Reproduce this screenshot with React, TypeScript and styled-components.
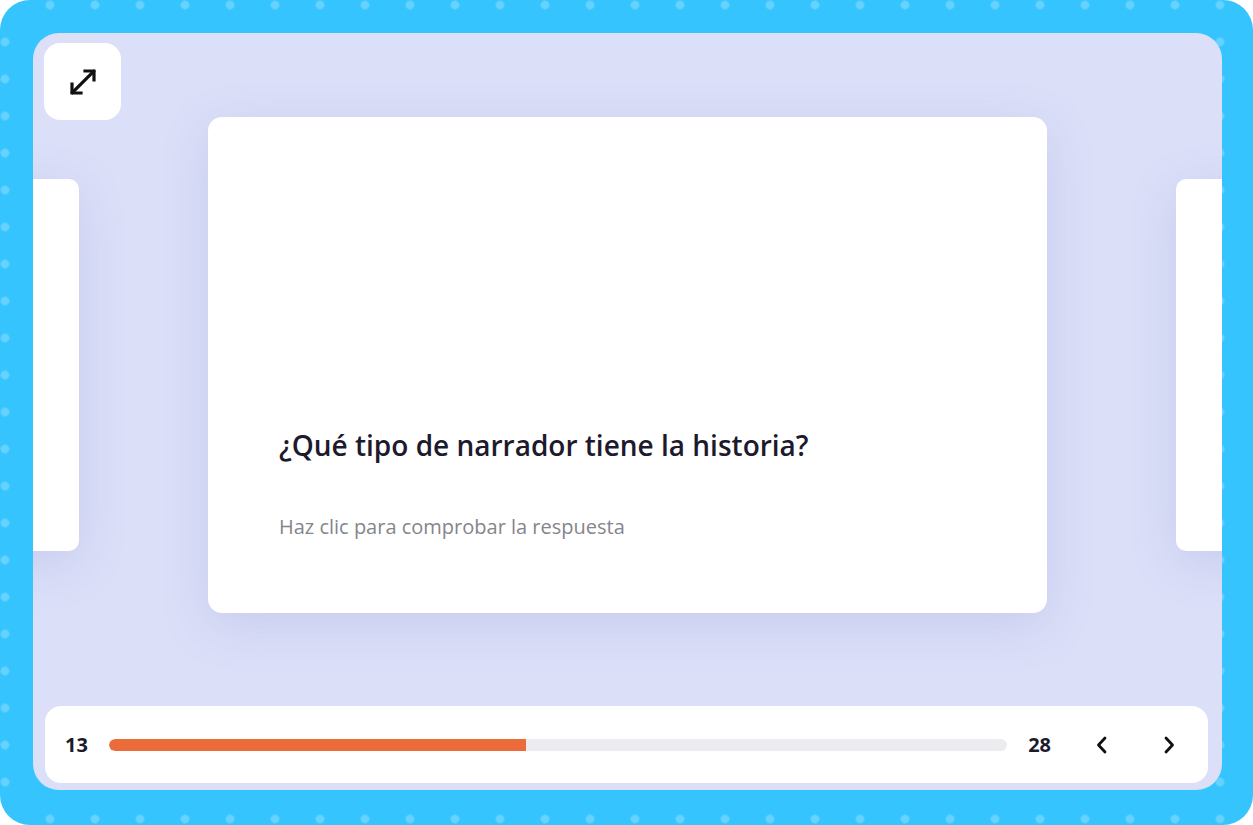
import React from 'react';
import styled, { createGlobalStyle } from 'styled-components';

const GlobalStyle = createGlobalStyle`
  html, body {
    margin: 0;
    padding: 0;
    width: 100%;
    height: 100%;
    overflow: hidden;
    background: #ffffff;
  }
  body {
    font-family: "Open Sans", "Noto Sans", "Liberation Sans", sans-serif;
  }
`;

const Frame = styled.div`
  width: 1253px;
  height: 825px;
  box-sizing: border-box;
  padding: 33px 31px 35px 33px;
  border-radius: 30px;
  background-color: #36c4ff;
  background-image: radial-gradient(circle, rgba(255, 255, 255, 0.24) 4px, transparent 4.6px);
  background-size: 45px 37px;
  background-position: -17.5px -13.5px;
  display: flex;
`;

const Panel = styled.div`
  position: relative;
  flex: 1;
  display: flex;
  flex-direction: column;
  gap: 9px;
  padding: 0 14px 7px 12px;
  border-radius: 26px;
  background: #dbdff8;
  overflow: hidden;
`;

const Stage = styled.div`
  height: 664px;
  margin: 0 -14px 0 -12px;
  display: flex;
  align-items: center;
  justify-content: center;
  gap: 129px;
  overflow: hidden;
`;

const Card = styled.div<{ $side?: boolean }>`
  flex: none;
  box-sizing: border-box;
  width: ${(p) => (p.$side ? '629px' : '839px')};
  height: ${(p) => (p.$side ? '372px' : '496px')};
  border-radius: ${(p) => (p.$side ? '10px' : '14px')};
  background: #ffffff;
  box-shadow: 0 12px 48px rgba(120, 128, 200, 0.2);
  display: flex;
  flex-direction: column;
  justify-content: flex-end;
  padding: 0 71px 74px;
  cursor: pointer;
`;

const Question = styled.h2`
  margin: 0 0 52px;
  font-family: "Open Sans", "Noto Sans", sans-serif;
  font-size: 28px;
  line-height: 33px;
  font-weight: 600;
  color: #1d1a2e;
`;

const Hint = styled.p`
  margin: 0;
  font-family: "Open Sans", "Noto Sans", sans-serif;
  font-size: 20px;
  line-height: 25px;
  font-weight: 400;
  color: #85858c;
`;

const ExpandButton = styled.button`
  position: absolute;
  top: 10px;
  left: 11px;
  width: 77px;
  height: 77px;
  border: none;
  border-radius: 16px;
  background: #ffffff;
  display: flex;
  align-items: center;
  justify-content: center;
  padding: 0;
  cursor: pointer;
  color: #111111;
`;

const Controls = styled.div`
  height: 77px;
  box-sizing: border-box;
  border-radius: 16px;
  background: #ffffff;
  display: flex;
  align-items: center;
  gap: 21px;
  padding: 0 19px 0 20px;
`;

const Count = styled.span`
  font-family: "Open Sans", "Noto Sans", sans-serif;
  font-size: 20px;
  font-weight: 700;
  color: #1d1a2e;
  min-width: 22px;
`;

const Track = styled.div`
  flex: 1;
  height: 12px;
  border-radius: 6px;
  background: #ececf0;
  overflow: hidden;
`;

const Fill = styled.div`
  height: 100%;
  background: #eb6b3a;
  border-radius: 6px 0 0 6px;
`;

const NavGroup = styled.div`
  display: flex;
  gap: 27px;
  margin-left: 10px;
`;

const NavButton = styled.button`
  width: 40px;
  height: 40px;
  border: none;
  background: transparent;
  padding: 0;
  display: flex;
  align-items: center;
  justify-content: center;
  cursor: pointer;
  color: #111111;
`;

const ExpandIcon = () => (
  <svg width="32" height="32" viewBox="0 0 32 32" fill="none" stroke="currentColor" strokeWidth="3.2" strokeLinecap="square">
    <path d="M5.5 26.5 L26.5 5.5" />
    <path d="M18 5 H27 V14" />
    <path d="M5 18 V27 H14" />
  </svg>
);

const Chevron = ({ dir }: { dir: 'left' | 'right' }) => (
  <svg width="14" height="20" viewBox="0 0 14 20" fill="none" stroke="currentColor" strokeWidth="2.8" strokeLinecap="round" strokeLinejoin="round">
    {dir === 'left' ? <path d="M10 3 L3.5 10 L10 17" /> : <path d="M4 3 L10.5 10 L4 17" />}
  </svg>
);

export default function App() {
  const current = 13;
  const total = 28;
  const progress = (current / total) * 100;

  return (
    <>
      <GlobalStyle />
      <Frame>
        <Panel>
          <Stage>
            <Card $side />
            <Card>
              <Question>¿Qué tipo de narrador tiene la historia?</Question>
              <Hint>Haz clic para comprobar la respuesta</Hint>
            </Card>
            <Card $side />
          </Stage>
          <ExpandButton aria-label="Pantalla completa">
            <ExpandIcon />
          </ExpandButton>
          <Controls>
            <Count>{current}</Count>
            <Track>
              <Fill style={{ width: `${progress}%` }} />
            </Track>
            <Count>{total}</Count>
            <NavGroup>
              <NavButton aria-label="Anterior">
                <Chevron dir="left" />
              </NavButton>
              <NavButton aria-label="Siguiente">
                <Chevron dir="right" />
              </NavButton>
            </NavGroup>
          </Controls>
        </Panel>
      </Frame>
    </>
  );
}
